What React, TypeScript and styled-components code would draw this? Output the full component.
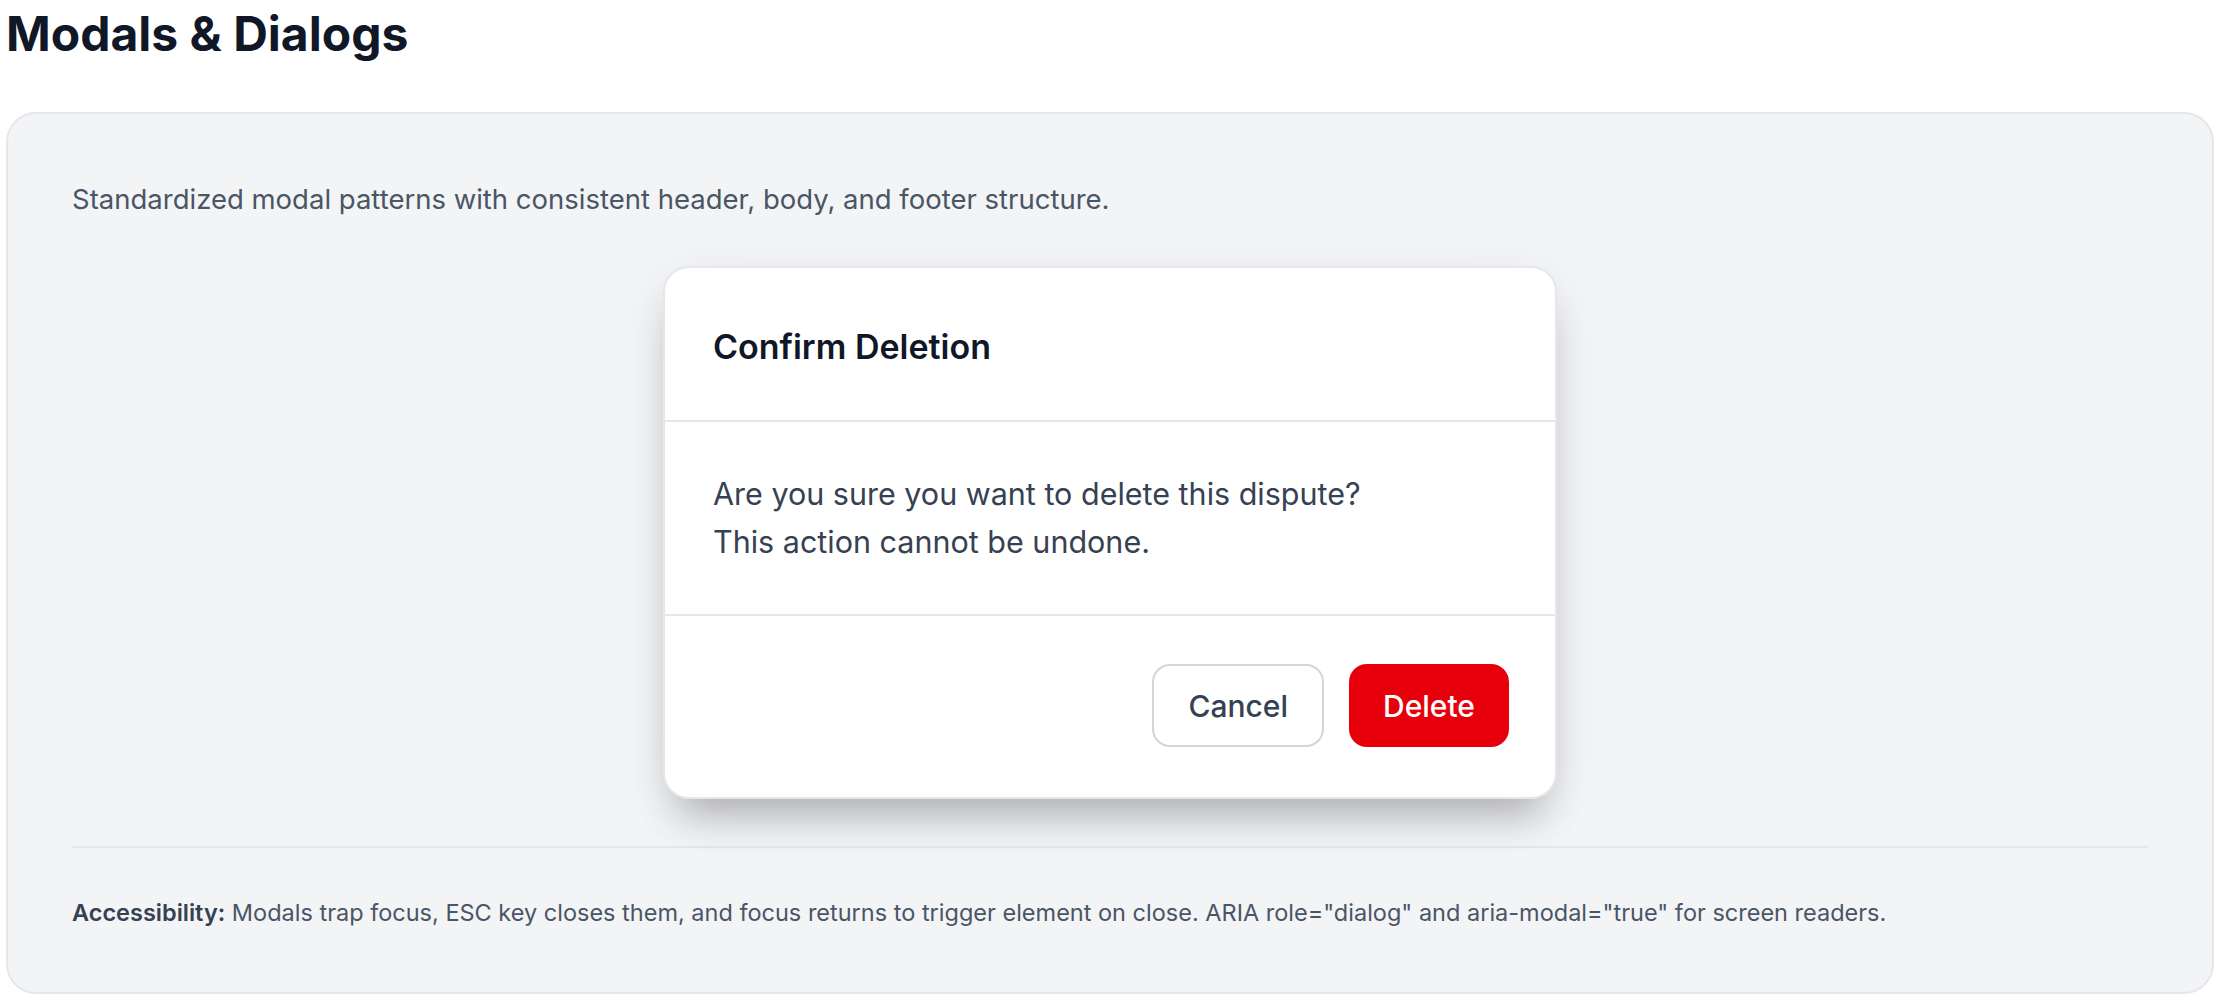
import React from 'react';
import styled, { createGlobalStyle } from 'styled-components';

const GlobalStyle = createGlobalStyle`
  * { box-sizing: border-box; }
  body {
    margin: 0;
    background: #ffffff;
    font-family: Inter, 'Noto Sans', sans-serif;
    -webkit-font-smoothing: antialiased;
  }
`;

const Page = styled.div`
  padding: 0 6px;
`;

const PageTitle = styled.h1`
  margin: 0 0 46px;
  padding-top: 2px;
  font-size: 48px;
  line-height: 64px;
  font-weight: 700;
  color: #101828;
`;

const Section = styled.section`
  background: #f3f4f6;
  border: 2px solid #e5e7eb;
  border-radius: 30px;
  padding: 64px 64px 62px;
  display: flex;
  flex-direction: column;
`;

const Lead = styled.p`
  margin: 0 0 46px;
  font-size: 27.5px;
  line-height: 42px;
  color: #4a5565;
`;

const Stage = styled.div`
  display: flex;
  justify-content: center;
  padding-bottom: 47px;
  border-bottom: 2px solid #e5e7eb;
`;

const Dialog = styled.div`
  width: 894px;
  background: #ffffff;
  border: 2px solid #e5e7eb;
  border-radius: 26px;
  box-shadow: 0 30px 40px -14px rgba(0, 0, 0, 0.24), 0 12px 60px -10px rgba(0, 0, 0, 0.1);
  overflow: hidden;
`;

const DialogHeader = styled.header`
  padding: 51px 48px 45px;
  border-bottom: 2px solid #e5e7eb;
`;

const DialogTitle = styled.h2`
  margin: 0;
  font-size: 34px;
  line-height: 56px;
  font-weight: 600;
  color: #101828;
`;

const DialogBody = styled.div`
  padding: 48px;
  border-bottom: 2px solid #e5e7eb;
  font-size: 30.5px;
  line-height: 48px;
  color: #364153;
`;

const DialogFooter = styled.footer`
  padding: 48px 46px 50px;
  display: flex;
  justify-content: flex-end;
  gap: 25px;
`;

const Button = styled.button<{ $danger?: boolean }>`
  height: 83px;
  padding: 0 34px;
  border-radius: 18px;
  font-family: Inter, 'Noto Sans', sans-serif;
  font-size: 30px;
  font-weight: 500;
  line-height: 48px;
  cursor: pointer;
  border: ${({ $danger }) => ($danger ? 'none' : '2px solid #d1d5dc')};
  background: ${({ $danger }) => ($danger ? '#e7000b' : '#ffffff')};
  color: ${({ $danger }) => ($danger ? '#ffffff' : '#364153')};
`;

const Note = styled.p`
  margin: 47px 0 0;
  font-size: 23.5px;
  line-height: 35px;
  color: #4a5565;

  strong {
    font-weight: 600;
    color: #364153;
  }
`;

export default function App() {
  return (
    <Page>
      <GlobalStyle />
      <PageTitle>Modals &amp; Dialogs</PageTitle>
      <Section>
        <Lead>Standardized modal patterns with consistent header, body, and footer structure.</Lead>
        <Stage>
          <Dialog role="dialog" aria-modal="true" aria-labelledby="confirm-title">
            <DialogHeader>
              <DialogTitle id="confirm-title">Confirm Deletion</DialogTitle>
            </DialogHeader>
            <DialogBody>
              Are you sure you want to delete this dispute?
              <br />
              This action cannot be undone.
            </DialogBody>
            <DialogFooter>
              <Button>Cancel</Button>
              <Button $danger>Delete</Button>
            </DialogFooter>
          </Dialog>
        </Stage>
        <Note>
          <strong>Accessibility:</strong> Modals trap focus, ESC key closes them, and focus returns to trigger
          element on close. ARIA role="dialog" and aria-modal="true" for screen readers.
        </Note>
      </Section>
    </Page>
  );
}
